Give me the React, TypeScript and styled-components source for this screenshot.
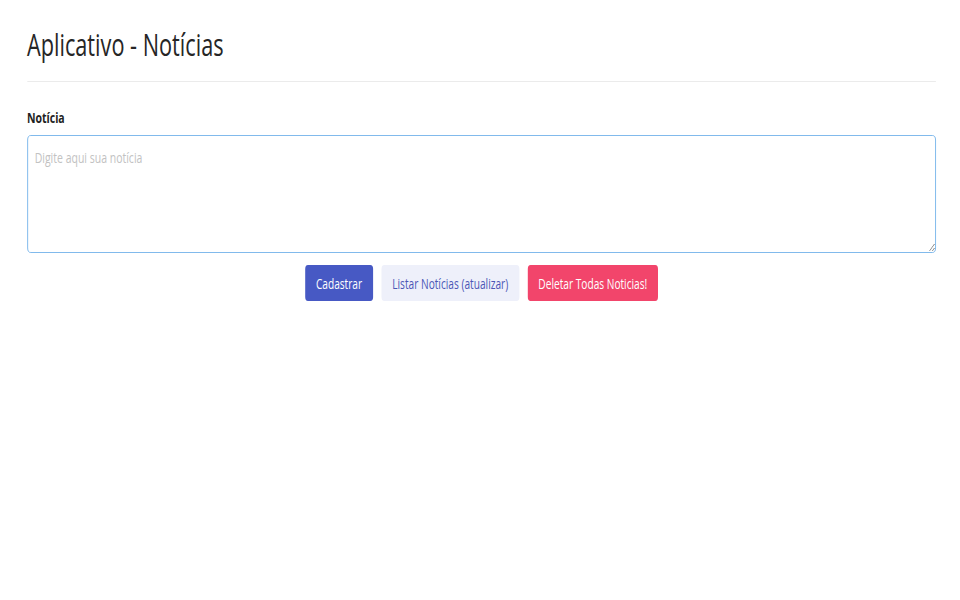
import { FC } from "react";
import styled, { createGlobalStyle } from "styled-components";

// the screenshot is horizontally compressed; the page is laid out wide and squeezed back
const SQUEEZE = 0.7;

const GlobalStyle = createGlobalStyle`
  body {
    margin: 0;
    background: #ffffff;
    font-family: "Open Sans", "Noto Sans", sans-serif;
    color: #212529;
    overflow: hidden;
  }
`;

type Variant = "primary" | "light" | "danger";

const variants: Record<Variant, { bg: string; fg: string }> = {
  primary: { bg: "#4759c4", fg: "#ffffff" },
  light: { bg: "#eef0fa", fg: "#4b57b6" },
  danger: { bg: "#f2456b", fg: "#ffffff" },
};

const App: FC = () => {
  return (
    <>
      <GlobalStyle />
      <Page>
        <Container>
          <Title>Aplicativo - Notícias</Title>
          <Divider />
          <Label htmlFor="noticia">Notícia</Label>
          <TextArea id="noticia" placeholder="Digite aqui sua notícia" />
          <Actions>
            <ActionButton variant="primary">Cadastrar</ActionButton>
            <ActionButton variant="light">Listar Notícias (atualizar)</ActionButton>
            <ActionButton variant="danger">Deletar Todas Noticias!</ActionButton>
          </Actions>
        </Container>
      </Page>
    </>
  );
};

export default App;

const Page = styled.div`
  width: calc(100vw / ${SQUEEZE});
  transform: scaleX(${SQUEEZE});
  transform-origin: 0 0;
`;

const Container = styled.div`
  display: flex;
  flex-direction: column;
  padding: 24px 34px 0 38.5px;
`;

const Title = styled.h1`
  margin: 0;
  font-size: 31px;
  font-weight: 400;
  line-height: 40px;
  color: #262626;
`;

const Divider = styled.hr`
  margin: 17px 0 0;
  border: 0;
  border-top: 1px solid #ebebeb;
`;

const Label = styled.label`
  margin-top: 25px;
  font-size: 15px;
  font-weight: 700;
  line-height: 20px;
  color: #222;
`;

const TextArea = styled.textarea`
  margin-top: 8px;
  height: 118px;
  box-sizing: border-box;
  padding: 11px 10px;
  border: 1.5px solid #6aaee8;
  border-radius: 5px;
  font-family: inherit;
  font-size: 15px;
  line-height: 20px;
  outline: none;
  resize: vertical;

  &::placeholder {
    color: #c2c2c2;
  }
`;

const Actions = styled.div`
  display: flex;
  justify-content: center;
  gap: 12px;
  margin-top: 12px;
`;

const ActionButton = styled.button<{ variant: Variant }>`
  height: 36px;
  padding: 0 15.5px;
  border: 0;
  border-radius: 4px;
  font-family: inherit;
  font-size: 14.5px;
  background: ${({ variant }) => variants[variant].bg};
  color: ${({ variant }) => variants[variant].fg};
  cursor: pointer;
`;
